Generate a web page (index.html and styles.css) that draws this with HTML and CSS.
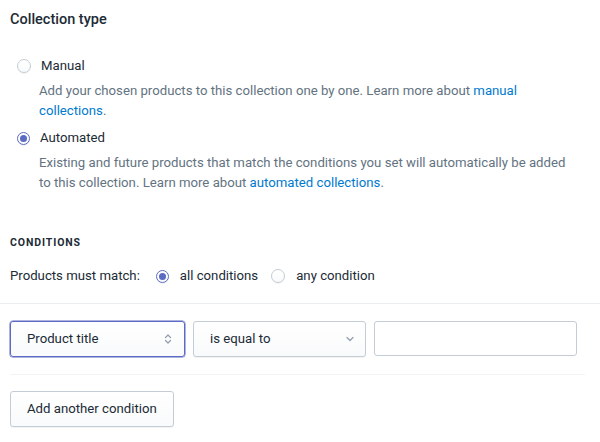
FILE: index.html
```html
<!DOCTYPE html>
<html lang="en">
<head>
  <meta charset="UTF-8" />
  <title>Collection type</title>
  <link rel="stylesheet" href="styles.css">
</head>
<body>
  <section class="card-section">
    <h2 class="heading">Collection type</h2>

    <ul class="choice-list">
      <li class="choice">
        <label class="choice-label">
          <span class="radio"></span>
          <span>Manual</span>
        </label>
        <p class="help">Add your chosen products to this collection one by one. Learn more about <a href="#">manual collections</a>.</p>
      </li>
      <li class="choice">
        <label class="choice-label">
          <span class="radio checked"></span>
          <span>Automated</span>
        </label>
        <p class="help">Existing and future products that match the conditions you set will automatically be added to this collection. Learn more about <a href="#">automated collections</a>.</p>
      </li>
    </ul>
  </section>

  <section class="conditions">
    <h3 class="subheading">Conditions</h3>
    <div class="match-row">
      <span>Products must match:</span>
      <label class="choice-label inline">
        <span class="radio checked"></span>
        <span>all conditions</span>
      </label>
      <label class="choice-label inline">
        <span class="radio"></span>
        <span>any condition</span>
      </label>
    </div>
  </section>

  <div class="condition-rows">
    <div class="condition-row">
      <div class="select focused">
        <span>Product title</span>
        <svg width="8" height="12" viewBox="0 0 8 12"><path d="M1.5 4.5 4 2l2.5 2.5M1.5 7.5 4 10l2.5-2.5" fill="none" stroke="#919eab" stroke-width="1.2" stroke-linecap="round" stroke-linejoin="round"/></svg>
      </div>
      <div class="select">
        <span>is equal to</span>
        <svg width="10" height="8" viewBox="0 0 10 8"><path d="M2 2.5 5 5.5l3-3" fill="none" stroke="#919eab" stroke-width="1.2" stroke-linecap="round" stroke-linejoin="round"/></svg>
      </div>
      <input class="text-field" type="text">
    </div>

    <div class="add-row">
      <button class="btn">Add another condition</button>
    </div>
  </div>
</body>
</html>
```

FILE: styles.css
```css
body {
  margin: 0;
  font-family: Roboto, "Liberation Sans", sans-serif;
  font-size: 13.2px;
  line-height: 20px;
  color: #212b36;
  background: #fff;
}
.card-section {
  padding: 10px 20px 0 10px;
}
.heading {
  margin: 0;
  font-size: 14.5px;
  font-weight: 500;
  line-height: 20px;
}
.choice-list {
  list-style: none;
  margin: 26px 0 0;
  padding: 0 0 0 7px;
}
.choice + .choice {
  margin-top: 7px;
}
.choice-label {
  display: flex;
  align-items: center;
  gap: 10px;
  line-height: 20px;
}
.radio {
  width: 12px;
  height: 12px;
  border: 1px solid #c4cdd5;
  border-radius: 50%;
  background: linear-gradient(#fff, #f9fafb);
  box-shadow: 0 1px 0 rgba(22, 29, 37, 0.05);
  display: inline-flex;
  align-items: center;
  justify-content: center;
  flex-shrink: 0;
}
.radio.checked {
  border: 1.5px solid #5c6ac4;
  width: 11px;
  height: 11px;
}
.radio.checked::after {
  content: "";
  width: 7px;
  height: 7px;
  border-radius: 50%;
  background: #5c6ac4;
}
.help {
  margin: 5px 0 0 22px;
  color: #637381;
}
.help a {
  color: #007ace;
  text-decoration: none;
}
.conditions {
  padding: 42px 10px 0;
}
.subheading {
  margin: 0;
  font-size: 10.5px;
  font-weight: 700;
  letter-spacing: 0.9px;
  text-transform: uppercase;
  line-height: 16px;
}
.match-row {
  display: flex;
  align-items: center;
  margin-top: 15px;
  padding-bottom: 17px;
}
.match-row .inline {
  gap: 11px;
  margin-left: 16px;
}
.match-row .inline + .inline {
  margin-left: 13px;
}
.condition-rows {
  border-top: 1px solid #ebeef0;
  padding: 17px 15px 14px 10px;
}
.condition-row {
  display: flex;
  gap: 8px;
  padding-bottom: 17px;
  border-bottom: 1px solid #f1f3f5;
}
.select {
  box-sizing: border-box;
  height: 36px;
  display: flex;
  align-items: center;
  justify-content: space-between;
  padding: 0 12px 0 16px;
  border: 1px solid #c4cdd5;
  border-radius: 3px;
  background: linear-gradient(#fff, #f9fafb);
  box-shadow: 0 1px 0 rgba(22, 29, 37, 0.05);
}
.select:first-child {
  width: 175px;
}
.select:nth-child(2) {
  width: 173px;
  padding-right: 10px;
}
.select.focused {
  border-color: #5c6ac4;
  box-shadow: 0 0 0 0.5px #5c6ac4;
}
.text-field {
  box-sizing: border-box;
  width: 203px;
  height: 35px;
  border: 1px solid #c4cdd5;
  border-radius: 3px;
  background: #fff;
  font: inherit;
}
.add-row {
  padding-top: 16px;
}
.btn {
  height: 36px;
  padding: 0 16px;
  font: inherit;
  color: #212b36;
  border: 1px solid #c4cdd5;
  border-radius: 3px;
  background: linear-gradient(#fff, #f9fafb);
  box-shadow: 0 1px 0 rgba(22, 29, 37, 0.05);
  cursor: pointer;
}
```
